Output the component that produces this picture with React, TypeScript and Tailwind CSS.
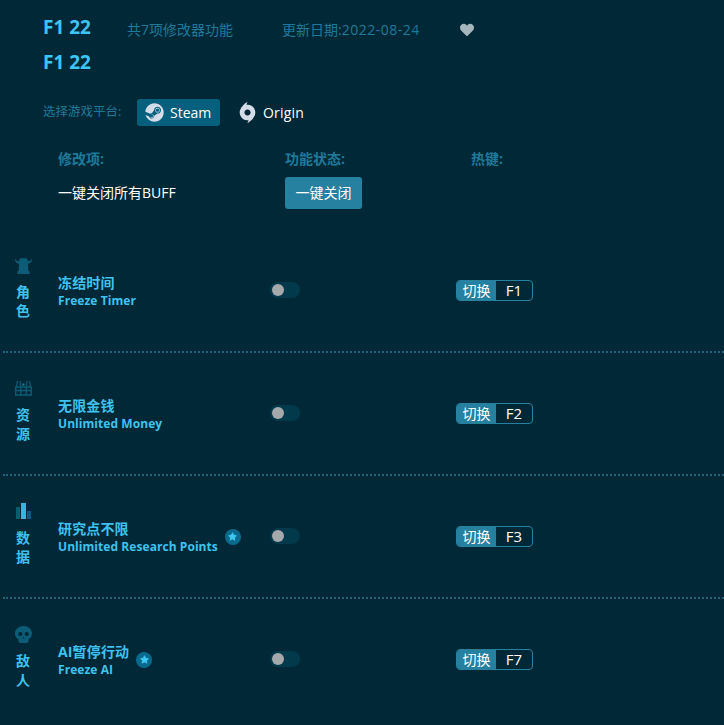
import { FaStar, FaHeart, FaSteam } from "react-icons/fa";
import { SiOrigin } from "react-icons/si";

const font = "font-['Open_Sans','Noto_Sans_CJK_SC',sans-serif]";

function HelmetIcon() {
  return (
    <svg width="17" height="17" viewBox="0 0 17 17" className="text-[#0d5c77]">
      <path
        fill="currentColor"
        d="M0 1c.4 1.900 1.300 3 3.900 3.300C4.200 3 4.800 1.800 5.600 1.200h5.800c.8.6 1.400 1.800 1.700 3.100C15.700 4 16.600 2.900 17 1v2.300c-.4 2-1.700 3.200-4 3.500l.3 6.700 1.300 1V17H2.400v-2.500l1.300-1L4 6.800C1.700 6.500.4 5.300 0 3.300z"
      />
    </svg>
  );
}

function ChestIcon() {
  return (
    <svg width="17" height="16" viewBox="0 0 17 16" fill="none" stroke="#0d5c77" strokeWidth="1.300">
      <path d="M1.500 7L2.500 1M15.500 7L14.500 1M5.500 1v5M11.500 1v5" />
      <path d="M.7 7h15.600v8H.7zM.7 10.500h15.600M5.800 7v8M11.200 7v8" />
      <path d="M7.500 3.500h2v2h-2z" fill="#1f85a8" stroke="none" />
    </svg>
  );
}

function BarsIcon() {
  return (
    <div className="flex items-end gap-[1px] h-[16px]">
      <div className="w-[4px] h-[12px] bg-[#0d5c77]" />
      <div className="w-[5px] h-[16px] bg-[#35b5e2]" />
      <div className="w-[4px] h-[8px] bg-[#0d5c77]" />
    </div>
  );
}

function SkullIcon() {
  return (
    <svg width="17" height="17" viewBox="0 0 17 17">
      <path
        fill="#0d5c77"
        d="M8.500 0C3.800 0 0 3.300 0 7.500c0 2.500 1.300 4.600 3.400 5.800V15c0 1.100.9 2 2 2h6.200c1.100 0 2-.9 2-2v-1.700C15.700 12.100 17 10 17 7.500 17 3.300 13.200 0 8.500 0z"
      />
      <circle cx="5.300" cy="8" r="2.100" fill="#002836" />
      <circle cx="11.700" cy="8" r="2.100" fill="#002836" />
      <path d="M8.500 10.500l1 2.200h-2z" fill="#002836" />
    </svg>
  );
}

function StarBadge() {
  return (
    <span className="w-[16px] h-[16px] rounded-full bg-[#0a6a8c] flex items-center justify-center shrink-0">
      <FaStar className="text-[#3cc4f2] text-[9px]" />
    </span>
  );
}

const rows = [
  { icon: <HelmetIcon />, cat: ["角", "色"], zh: "冻结时间", en: "Freeze Timer", key: "F1", star: false },
  { icon: <ChestIcon />, cat: ["资", "源"], zh: "无限金钱", en: "Unlimited Money", key: "F2", star: false },
  { icon: <BarsIcon />, cat: ["数", "据"], zh: "研究点不限", en: "Unlimited Research Points", key: "F3", star: true },
  { icon: <SkullIcon />, cat: ["敌", "人"], zh: "AI暂停行动", en: "Freeze AI", key: "F7", star: true },
];

export default function App() {
  return (
    <div className={`${font} w-[724px] h-[725px] overflow-hidden bg-[#002836] text-[#3fc2ef]`}>
      {/* game header */}
      <div className="pl-[43px] pt-[13px]">
        <div className="flex items-center h-[28px]">
          <h1 className="w-[84px] text-[19px] font-bold text-[#3cc4f2] leading-none">F1 22</h1>
          <span className="w-[155px] mt-[4px] text-[14px] text-[#1f7a9a]">共7项修改器功能</span>
          <span className="w-[178px] mt-[4px] text-[14px] text-[#1f7a9a]">
            更新日期:<span className="tracking-[0.5px]">2022-08-24</span>
          </span>
          <FaHeart className="mt-[6px] text-[#a6b6bc] text-[14px]" />
        </div>
        <h2 className="mt-[7px] h-[28px] flex items-center text-[19px] font-bold text-[#3cc4f2] leading-none">F1 22</h2>

        <div className="mt-[23px] flex items-center h-[27px]">
          <span className="w-[94px] text-[12.5px] text-[#1f7a9a]">选择游戏平台:</span>
          <button className="w-[83px] h-[27px] rounded-[3px] bg-[#05607e] flex items-center pl-[8px] gap-[6px] text-white text-[14px]">
            <FaSteam className="text-[19px] text-[#d3dce8]" />
            Steam
          </button>
          <div className="ml-[17px] flex items-center gap-[5px] text-white text-[14px] tracking-[0.2px]">
            <SiOrigin className="text-[21px] text-[#d3dce8]" />
            Origin
          </div>
        </div>
      </div>

      {/* column titles and close-all */}
      <div className="pl-[58px] mt-[22px]">
        <div className="flex items-center h-[20px] text-[14px] font-bold text-[#1f7a9a]">
          <span className="w-[227px]">修改项:</span>
          <span className="w-[186px]">功能状态:</span>
          <span>热键:</span>
        </div>
        <div className="mt-[9px] flex items-center h-[32px] text-white text-[14px]">
          <span className="w-[227px] mb-[2px]">一键关闭所有BUFF</span>
          <button className="w-[77px] h-[32px] pb-[2px] rounded-[3px] bg-[#26809f] text-[14px]">一键关闭</button>
        </div>
      </div>

      {/* cheat rows */}
      <div className="mt-[21px] pl-[3px]">
        {rows.map((r) => (
          <div key={r.key} className="h-[123px] flex items-center border-b-2 border-dotted border-[#1c6579] last:border-transparent">
            <div className="w-[40px] pb-[5px] flex flex-col items-center">
              <div className="h-[18px] flex items-center justify-center">{r.icon}</div>
              <div className="mt-[8px] flex flex-col text-[14px] font-bold leading-[19px]">
                {r.cat.map((c) => (
                  <span key={c}>{c}</span>
                ))}
              </div>
            </div>
            <div className="ml-[15px] w-[212px] flex items-center gap-[7px]">
              <div className="flex flex-col pt-[2px]">
                <span className="text-[14px] font-bold leading-[17px] tracking-[0.15px]">{r.zh}</span>
                <span className="mt-[1px] text-[12px] font-bold leading-[17px] tracking-[0.06px] whitespace-nowrap">{r.en}</span>
              </div>
              {r.star && <StarBadge />}
            </div>
            <div className="w-[30px] h-[16px] mb-[2px] rounded-full bg-[#023a4b] flex items-center pl-[2px]">
              <span className="w-[12px] h-[12px] rounded-full bg-[#a5a9ab]" />
            </div>
            <div className="ml-[156px] w-[77px] h-[21px] flex rounded-[4px] border border-[#26809f] overflow-hidden text-[14px] text-white">
              <span className="w-[39px] bg-[#26809f] flex items-center justify-center">切换</span>
              <span className="flex-1 flex items-center justify-center text-[15px]">{r.key}</span>
            </div>
          </div>
        ))}
      </div>
    </div>
  );
}
